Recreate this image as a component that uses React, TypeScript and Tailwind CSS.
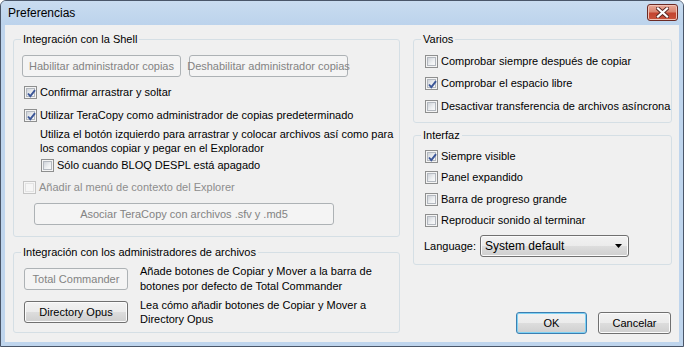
import React from 'react';
import clsx from 'clsx';

function CheckBox({ checked = false, disabled = false }: { checked?: boolean; disabled?: boolean }) {
  return (
    <span
      className={clsx(
        'relative flex h-[13px] w-[13px] shrink-0 items-center justify-center border',
        disabled ? 'border-[#c5c5c5] bg-[#f6f6f6]' : 'border-[#8e8f8f] bg-[#f4f4f4]'
      )}
    >
      <span
        className={clsx(
          'h-[9px] w-[9px] border',
          disabled
            ? 'border-[#e3e3e3] bg-[#f6f6f6]'
            : 'border-[#b3b8bf] bg-[linear-gradient(135deg,#cfd3d9_0%,#eef0f2_60%,#fafafa_100%)]'
        )}
      />
      {checked && (
        <svg className="absolute left-[1px] top-[1px]" width="11" height="11" viewBox="0 0 11 11">
          <path d="M2 5.5 L4.3 8.2 L9 2.2" fill="none" stroke="#3c5798" strokeWidth="1.9" strokeLinejoin="miter" />
        </svg>
      )}
    </span>
  );
}

function CheckRow({
  label,
  checked,
  disabled,
  className,
}: {
  label: string;
  checked?: boolean;
  disabled?: boolean;
  className?: string;
}) {
  return (
    <div className={clsx('flex h-[14px] items-center', className)}>
      <CheckBox checked={checked} disabled={disabled} />
      <span className={clsx('ml-[3px] whitespace-nowrap', disabled && 'text-[#8d8d8d]')}>{label}</span>
    </div>
  );
}

function Button({
  children,
  disabled = false,
  isDefault = false,
  className,
}: {
  children: React.ReactNode;
  disabled?: boolean;
  isDefault?: boolean;
  className?: string;
}) {
  return (
    <div
      className={clsx(
        'flex h-[22px] shrink-0 items-center justify-center whitespace-nowrap rounded-[3px] border',
        disabled
          ? 'border-[#adb2b5] bg-[#f4f4f4] text-[#838383]'
          : isDefault
            ? 'border-[#3c7fb1] bg-[linear-gradient(to_bottom,#f2f2f2_0%,#ebebeb_50%,#dddddd_50%,#cfcfcf_100%)] shadow-[inset_0_0_0_1px_#7fd2f4]'
            : 'border-[#707070] bg-[linear-gradient(to_bottom,#f2f2f2_0%,#ebebeb_50%,#dddddd_50%,#cfcfcf_100%)] shadow-[inset_0_0_0_1px_#fbfbfb]',
        className
      )}
    >
      {children}
    </div>
  );
}

function Group({ title, children, className }: { title: string; children: React.ReactNode; className?: string }) {
  return (
    <fieldset className={clsx('rounded-[3px] border border-[#d5dfe5]', className)}>
      <legend className="ml-[7px] px-[2px] leading-[14px]">{title}</legend>
      {children}
    </fieldset>
  );
}

export default function App() {
  return (
    <div className="flex h-[347px] w-[684px] flex-col overflow-hidden rounded-t-[6px] border border-[#4a5669] bg-[#bfd5ed] font-['Liberation_Sans',Arial,sans-serif] text-[11px] text-black">
      {/* Title bar */}
      <div className="flex h-[24px] shrink-0 items-center justify-between bg-[linear-gradient(to_bottom,#c9dcf0,#bcd3ec)] pl-[7px] pr-[5px]">
        <span className="text-[12px]">Preferencias</span>
        <div className="mb-[1px] flex h-[17px] w-[31px] items-center justify-center rounded-[3px] border border-[#6b2a24] bg-[linear-gradient(to_bottom,#e9a897_0%,#d98570_45%,#c3432f_55%,#c9543c_100%)] shadow-[inset_0_0_0_1px_#f1c2b6]">
          <svg width="13" height="11" viewBox="0 0 13 11">
            <path d="M2 1.5 L11 9.5 M11 1.5 L2 9.5" stroke="#5a2a25" strokeWidth="4" strokeLinecap="square" />
            <path d="M2 1.5 L11 9.5 M11 1.5 L2 9.5" stroke="#ffffff" strokeWidth="2.2" strokeLinecap="square" />
          </svg>
        </div>
      </div>

      {/* Client */}
      <div className="mx-[4px] mb-[4px] flex min-h-0 flex-1 gap-[13px] bg-[#f0f0f0] pb-[8px] pl-[8px] pr-[7px] pt-[7px]">
        {/* Left column */}
        <div className="flex w-[387px] flex-col">
          <Group title="Integración con la Shell" className="pb-[11px]">
            <div className="mt-[9px] flex gap-[8px] pl-[8px]">
              <Button disabled className="w-[159px]">Habilitar administrador copias</Button>
              <Button disabled className="w-[159px]">Deshabilitar administrador copias</Button>
            </div>
            <CheckRow className="mt-[8px] pl-[10px]" checked label="Confirmar arrastrar y soltar" />
            <CheckRow className="mt-[9px] pl-[10px]" checked label="Utilizar TeraCopy como administrador de copias predeterminado" />
            <p className="mt-[5px] pl-[26px] leading-[14px]">
              Utiliza el botón izquierdo para arrastrar y colocar archivos así como para
              <br />
              los comandos copiar y pegar en el Explorador
            </p>
            <CheckRow className="mt-[3px] pl-[27px]" label="Sólo cuando BLOQ DESPL está apagado" />
            <CheckRow className="mt-[8px] pl-[9px]" disabled label="Añadir al menú de contexto del Explorer" />
            <div className="mt-[9px] pl-[20px]">
              <Button disabled className="w-[300px]">Asociar TeraCopy con archivos .sfv y .md5</Button>
            </div>
          </Group>

          <Group title="Integración con los administradores de archivos" className="mt-[8px] pb-[6px]">
            <div className="mt-[5px] flex items-center gap-[12px] pl-[10px]">
              <Button disabled className="w-[104px]">Total Commander</Button>
              <p className="leading-[15px]">
                Añade botones de Copiar y Mover a la barra de
                <br />
                botones por defecto de Total Commander
              </p>
            </div>
            <div className="mt-[4px] flex items-center gap-[12px] pl-[10px]">
              <Button className="w-[104px]">Directory Opus</Button>
              <p className="leading-[14px]">
                Lea cómo añadir botones de Copiar y Mover a
                <br />
                Directory Opus
              </p>
            </div>
          </Group>
        </div>

        {/* Right column */}
        <div className="flex flex-1 flex-col">
          <Group title="Varios" className="pb-[9px]">
            <div className="mt-[8px] flex flex-col gap-[8px] pl-[11px]">
              <CheckRow label="Comprobar siempre después de copiar" />
              <CheckRow checked label="Comprobar el espacio libre" />
              <CheckRow className="mt-[1px]" label="Desactivar transferencia de archivos asíncrona" />
            </div>
          </Group>

          <Group title="Interfaz" className="mt-[5px] pb-[7px]">
            <div className="mt-[7px] flex flex-col gap-[7px] pl-[11px]">
              <CheckRow checked label="Siempre visible" />
              <CheckRow label="Panel expandido" />
              <CheckRow className="mt-[1px]" label="Barra de progreso grande" />
              <CheckRow label="Reproducir sonido al terminar" />
            </div>
            <div className="mt-[8px] flex items-center pl-[10px]">
              <span className="w-[56px]">Language:</span>
              <div className="flex h-[22px] w-[149px] items-center justify-between rounded-[3px] border border-[#707070] bg-[linear-gradient(to_bottom,#f2f2f2_0%,#ebebeb_50%,#dddddd_50%,#cfcfcf_100%)] pl-[4px] pr-[6px] text-[12px] shadow-[inset_0_0_0_1px_#fbfbfb]">
                <span>System default</span>
                <svg width="7" height="4" viewBox="0 0 7 4">
                  <path d="M0 0 H7 L3.5 4 Z" fill="#000" />
                </svg>
              </div>
            </div>
          </Group>

          <div className="mt-auto flex justify-end gap-[11px] pr-[1px]">
            <Button isDefault className="w-[71px]">OK</Button>
            <Button className="w-[73px]">Cancelar</Button>
          </div>
        </div>
      </div>
    </div>
  );
}
